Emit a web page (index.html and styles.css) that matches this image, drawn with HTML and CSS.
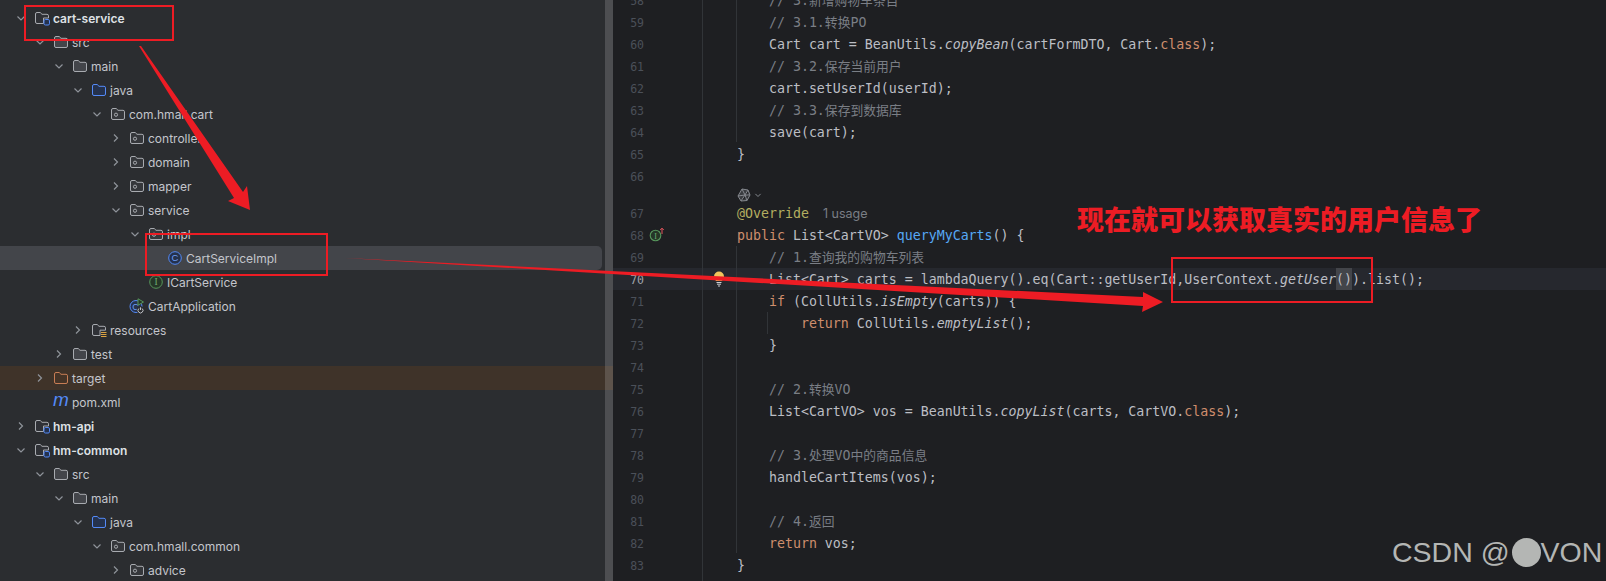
FILE: index.html
```html
<!DOCTYPE html>
<html lang="zh">
<head>
<meta charset="utf-8">
<title>cart-service</title>
<link rel="stylesheet" href="styles.css">
</head>
<body>
<svg class="defs" width="0" height="0" aria-hidden="true">
  <defs>
    <symbol id="down" viewBox="0 0 16 16"><path d="M4.500 6.500 8 10l3.500-3.500" fill="none" stroke="#8f939a" stroke-width="1.200"/></symbol>
    <symbol id="right" viewBox="0 0 16 16"><path d="M6 4.500 9.500 8 6 11.500" fill="none" stroke="#8f939a" stroke-width="1.200"/></symbol>
    <symbol id="folder" viewBox="0 0 16 16"><path d="M1.500 4a1.500 1.500 0 0 1 1.500-1.500h3.200l1.800 1.800h5a1.500 1.500 0 0 1 1.500 1.500v6.200a1.500 1.500 0 0 1-1.500 1.500H3a1.500 1.500 0 0 1-1.500-1.500z" fill="#43454a" stroke="#a8abb0"/></symbol>
    <symbol id="module" viewBox="0 0 16 16"><path d="M1.500 4a1.500 1.500 0 0 1 1.500-1.500h3.200l1.800 1.800h5a1.500 1.500 0 0 1 1.500 1.500v2.200H9.500v5.500H3a1.500 1.500 0 0 1-1.500-1.500z" fill="#2f3136" stroke="#a8abb0"/><rect x="10" y="9.500" width="5.500" height="5.500" rx="1.400" fill="#25324d" stroke="#548af7"/></symbol>
    <symbol id="source" viewBox="0 0 16 16"><path d="M1.500 4a1.500 1.500 0 0 1 1.500-1.500h3.200l1.800 1.800h5a1.500 1.500 0 0 1 1.500 1.500v6.200a1.500 1.500 0 0 1-1.500 1.500H3a1.500 1.500 0 0 1-1.500-1.500z" fill="#25324d" stroke="#548af7"/></symbol>
    <symbol id="package" viewBox="0 0 16 16"><path d="M1.500 4a1.500 1.500 0 0 1 1.500-1.500h3.200l1.800 1.800h5a1.500 1.500 0 0 1 1.500 1.500v6.200a1.500 1.500 0 0 1-1.500 1.500H3a1.500 1.500 0 0 1-1.500-1.500z" fill="#35373b" stroke="#a8abb0"/><circle cx="6" cy="8.700" r="1.600" fill="none" stroke="#a8abb0"/></symbol>
    <symbol id="target" viewBox="0 0 16 16"><path d="M1.500 4a1.500 1.500 0 0 1 1.500-1.500h3.200l1.800 1.800h5a1.500 1.500 0 0 1 1.500 1.500v6.200a1.500 1.500 0 0 1-1.500 1.500H3a1.500 1.500 0 0 1-1.500-1.500z" fill="#453427" stroke="#c77d55"/></symbol>
    <symbol id="resources" viewBox="0 0 16 16"><path d="M1.500 4a1.500 1.500 0 0 1 1.500-1.500h3.200l1.800 1.800h5a1.500 1.500 0 0 1 1.500 1.500v2.400H9v5.300H3a1.500 1.500 0 0 1-1.500-1.500z" fill="#2f3136" stroke="#a8abb0"/><path d="M10 10.500h5.500M10 12.500h5.500M10 14.500h5.500" stroke="#d9a343" stroke-width="1"/></symbol>
    <symbol id="class" viewBox="0 0 16 16"><circle cx="8" cy="8" r="6.300" fill="#25324d" stroke="#548af7"/><text x="8" y="11.300" text-anchor="middle" font-size="9.500" font-family="Liberation Sans, sans-serif" fill="#6f9ff8">C</text></symbol>
    <symbol id="iface" viewBox="0 0 16 16"><circle cx="8" cy="8" r="6.300" fill="#253627" stroke="#57965c"/><text x="8" y="11.300" text-anchor="middle" font-size="9.500" font-family="Liberation Serif, serif" fill="#6fae74">I</text></symbol>
    <symbol id="app" viewBox="0 0 16 16"><circle cx="7" cy="8.500" r="6" fill="#25324d" stroke="#548af7"/><text x="6.500" y="11.800" text-anchor="middle" font-size="9" font-family="Liberation Sans, sans-serif" fill="#6f9ff8">C</text><path d="M9 .8v6.400L14.500 4z" fill="#253627" stroke="#57965c"/><circle cx="11.500" cy="12" r="3.800" fill="#2b2d30"/><path d="M9.900 10.500a2.500 2.500 0 1 0 3.200 0M11.500 9.300v2.700" fill="none" stroke="#c0c2c7"/></symbol>
    <symbol id="gutter-impl" viewBox="0 0 16 16"><circle cx="6.500" cy="8.500" r="5.300" fill="#253627" stroke="#57965c" stroke-width="1.100"/><text x="6.500" y="11.500" text-anchor="middle" font-size="8" font-family="Liberation Serif, serif" fill="#6fae74">I</text><path d="M13 7V1.200M11.200 3 13 1.200 14.800 3" fill="none" stroke="#e2545c" stroke-width="1"/></symbol>
    <symbol id="lamp" viewBox="0 0 12 16"><path d="M1 5.500a5 5 0 0 1 10 0c0 1.800-1.200 3-2 4.500H3C2.200 8.500 1 7.300 1 5.500z" fill="#f2c55c"/><path d="M3.500 11.500h5M4 13.200h4M5 15h2" stroke="#ced0d6" stroke-width="1"/></symbol>
    <symbol id="swirl" viewBox="0 0 14 14"><path d="M5 1 11 2 13 7 10 12.500 4 13 1 8zM5 1l3 6-7 1M11 2 8 7l2 5.500M13 7H8L4 13" fill="#3a3c40" stroke="#85888e" stroke-width="1"/></symbol>
  </defs>
</svg>

<div class="window">
  <aside class="tree">
    <div class="row d0"><svg class="chev"><use href="#down"/></svg><svg class="ico"><use href="#module"/></svg><span class="mod">cart-service</span></div>
    <div class="row d1"><svg class="chev"><use href="#down"/></svg><svg class="ico"><use href="#folder"/></svg><span>src</span></div>
    <div class="row d2"><svg class="chev"><use href="#down"/></svg><svg class="ico"><use href="#folder"/></svg><span>main</span></div>
    <div class="row d3"><svg class="chev"><use href="#down"/></svg><svg class="ico"><use href="#source"/></svg><span>java</span></div>
    <div class="row d4"><svg class="chev"><use href="#down"/></svg><svg class="ico"><use href="#package"/></svg><span>com.hmall.cart</span></div>
    <div class="row d5"><svg class="chev"><use href="#right"/></svg><svg class="ico"><use href="#package"/></svg><span>controller</span></div>
    <div class="row d5"><svg class="chev"><use href="#right"/></svg><svg class="ico"><use href="#package"/></svg><span>domain</span></div>
    <div class="row d5"><svg class="chev"><use href="#right"/></svg><svg class="ico"><use href="#package"/></svg><span>mapper</span></div>
    <div class="row d5"><svg class="chev"><use href="#down"/></svg><svg class="ico"><use href="#package"/></svg><span>service</span></div>
    <div class="row d6"><svg class="chev"><use href="#down"/></svg><svg class="ico"><use href="#package"/></svg><span>impl</span></div>
    <div class="row d7 selected"><i class="chev"></i><svg class="ico"><use href="#class"/></svg><span>CartServiceImpl</span></div>
    <div class="row d6"><i class="chev"></i><svg class="ico"><use href="#iface"/></svg><span>ICartService</span></div>
    <div class="row d5"><i class="chev"></i><svg class="ico"><use href="#app"/></svg><span>CartApplication</span></div>
    <div class="row d3"><svg class="chev"><use href="#right"/></svg><svg class="ico"><use href="#resources"/></svg><span>resources</span></div>
    <div class="row d2"><svg class="chev"><use href="#right"/></svg><svg class="ico"><use href="#folder"/></svg><span>test</span></div>
    <div class="row d1 excluded"><svg class="chev"><use href="#right"/></svg><svg class="ico"><use href="#target"/></svg><span>target</span></div>
    <div class="row d1"><i class="chev"></i><span class="maven">m</span><span>pom.xml</span></div>
    <div class="row d0"><svg class="chev"><use href="#right"/></svg><svg class="ico"><use href="#module"/></svg><span class="mod">hm-api</span></div>
    <div class="row d0"><svg class="chev"><use href="#down"/></svg><svg class="ico"><use href="#module"/></svg><span class="mod">hm-common</span></div>
    <div class="row d1"><svg class="chev"><use href="#down"/></svg><svg class="ico"><use href="#folder"/></svg><span>src</span></div>
    <div class="row d2"><svg class="chev"><use href="#down"/></svg><svg class="ico"><use href="#folder"/></svg><span>main</span></div>
    <div class="row d3"><svg class="chev"><use href="#down"/></svg><svg class="ico"><use href="#source"/></svg><span>java</span></div>
    <div class="row d4"><svg class="chev"><use href="#down"/></svg><svg class="ico"><use href="#package"/></svg><span>com.hmall.common</span></div>
    <div class="row d5"><svg class="chev"><use href="#right"/></svg><svg class="ico"><use href="#package"/></svg><span>advice</span></div>
    <div class="scrollbar"></div>
  </aside>

  <main class="editor">
    <div class="guide gutter-line"></div>
    <div class="guide body-a"></div>
    <div class="guide body-b"></div>
    <div class="guide body-c"></div>
    <div class="lines">
      <div class="line"><span class="ln">58</span><span class="mark"></span><code>    <span class="c">// 3.<span class="z">新增购物车条目</span></span></code></div>
      <div class="line"><span class="ln">59</span><span class="mark"></span><code>    <span class="c">// 3.1.<span class="z">转换</span>PO</span></code></div>
      <div class="line"><span class="ln">60</span><span class="mark"></span><code>    Cart cart = BeanUtils.<em>copyBean</em>(cartFormDTO, Cart.<span class="k">class</span>);</code></div>
      <div class="line"><span class="ln">61</span><span class="mark"></span><code>    <span class="c">// 3.2.<span class="z">保存当前用户</span></span></code></div>
      <div class="line"><span class="ln">62</span><span class="mark"></span><code>    cart.setUserId(userId);</code></div>
      <div class="line"><span class="ln">63</span><span class="mark"></span><code>    <span class="c">// 3.3.<span class="z">保存到数据库</span></span></code></div>
      <div class="line"><span class="ln">64</span><span class="mark"></span><code>    save(cart);</code></div>
      <div class="line"><span class="ln">65</span><span class="mark"></span><code>}</code></div>
      <div class="line"><span class="ln">66</span><span class="mark"></span><code></code></div>
      <div class="inlay"><svg class="swirl"><use href="#swirl"/></svg><svg class="inlay-chev"><use href="#down"/></svg></div>
      <div class="line"><span class="ln">67</span><span class="mark"></span><code><span class="a">@Override</span><span class="usage">1 usage</span></code></div>
      <div class="line"><span class="ln">68</span><span class="mark"><svg class="impl"><use href="#gutter-impl"/></svg></span><code><span class="k">public</span> List&lt;CartVO&gt; <span class="m">queryMyCarts</span>() {</code></div>
      <div class="line"><span class="ln">69</span><span class="mark"></span><code>    <span class="c">// 1.<span class="z">查询我的购物车列表</span></span></code></div>
      <div class="line caret"><span class="ln cur">70</span><span class="mark"><svg class="lamp"><use href="#lamp"/></svg></span><code>    List&lt;Cart&gt; carts = lambdaQuery().eq(Cart::getUserId,UserContext.<em>getUser</em><span class="pair">()</span>).list();</code></div>
      <div class="line"><span class="ln">71</span><span class="mark"></span><code>    <span class="k">if</span> (CollUtils.<em>isEmpty</em>(carts)) {</code></div>
      <div class="line"><span class="ln">72</span><span class="mark"></span><code>        <span class="k">return</span> CollUtils.<em>emptyList</em>();</code></div>
      <div class="line"><span class="ln">73</span><span class="mark"></span><code>    }</code></div>
      <div class="line"><span class="ln">74</span><span class="mark"></span><code></code></div>
      <div class="line"><span class="ln">75</span><span class="mark"></span><code>    <span class="c">// 2.<span class="z">转换</span>VO</span></code></div>
      <div class="line"><span class="ln">76</span><span class="mark"></span><code>    List&lt;CartVO&gt; vos = BeanUtils.<em>copyList</em>(carts, CartVO.<span class="k">class</span>);</code></div>
      <div class="line"><span class="ln">77</span><span class="mark"></span><code></code></div>
      <div class="line"><span class="ln">78</span><span class="mark"></span><code>    <span class="c">// 3.<span class="z">处理</span>VO<span class="z">中的商品信息</span></span></code></div>
      <div class="line"><span class="ln">79</span><span class="mark"></span><code>    handleCartItems(vos);</code></div>
      <div class="line"><span class="ln">80</span><span class="mark"></span><code></code></div>
      <div class="line"><span class="ln">81</span><span class="mark"></span><code>    <span class="c">// 4.<span class="z">返回</span></span></code></div>
      <div class="line"><span class="ln">82</span><span class="mark"></span><code>    <span class="k">return</span> vos;</code></div>
      <div class="line"><span class="ln">83</span><span class="mark"></span><code>}</code></div>
    </div>
  </main>

  <svg class="marks" width="1606" height="581" viewBox="0 0 1606 581" aria-hidden="true">
    <g fill="none" stroke="#ed1c24" stroke-width="2">
      <rect x="25" y="6" width="148" height="34"/>
      <rect x="146" y="234" width="181" height="41"/>
      <rect x="1172" y="258" width="200" height="44"/>
    </g>
    <g fill="#ed1c24">
      <path d="M139 46 141 46 243 192 247 186 250 210 228 201 234 198z"/>
      <path d="M345 258 1143 297 1143 292 1163 302 1142 312 1143 306z"/>
    </g>
  </svg>
  <div class="note">现在就可以获取真实的用户信息了</div>
  <div class="watermark">CSDN @<i class="blob"></i>VON</div>
</div>
</body>
</html>
```
FILE: styles.css
```css
* { box-sizing: border-box; }
html, body { margin: 0; padding: 0; height: 581px; overflow: hidden; background: #1e1f22; }
.defs { position: absolute; }

.window { position: relative; display: flex; width: 1606px; height: 581px; overflow: hidden; }

/* project tree */
.tree {
  position: relative;
  flex: 0 0 613px;
  padding-top: 6px;
  background: #2b2d30;
  color: #c4c6cc;
  font: 12px/22px Inter, "Noto Sans", sans-serif;
  overflow: hidden;
}
.row { display: flex; align-items: center; height: 24px; white-space: nowrap; }
.row span { padding-top: 2px; }
.d0 { padding-left: 13px; }
.d1 { padding-left: 32px; }
.d2 { padding-left: 51px; }
.d3 { padding-left: 70px; }
.d4 { padding-left: 89px; }
.d5 { padding-left: 108px; }
.d6 { padding-left: 127px; }
.d7 { padding-left: 146px; }
.chev { display: block; flex: 0 0 16px; width: 16px; height: 16px; margin-right: 5px; }
.ico { display: block; flex: 0 0 16px; width: 16px; height: 16px; margin-right: 3px; }
.mod { font-weight: 600; color: #dfe1e5; }
.selected { margin-right: 11px; border-radius: 0 5px 5px 0; background: #43454a; }
.excluded { background: #3f3329; }
.row .maven {
  flex: 0 0 16px;
  width: 16px;
  margin-right: 3px;
  padding-top: 0;
  color: #548af7;
  font: italic 19px/24px "Liberation Sans", sans-serif;
  transform: translateY(-2px);
}
.scrollbar {
  position: absolute;
  top: 0;
  bottom: 0;
  left: 605px;
  width: 8px;
  background: rgba(255, 255, 255, 0.16);
}

/* editor */
.editor {
  position: relative;
  flex: 1 1 auto;
  background: #1e1f22;
  color: #bcbec4;
  font: 13.280px/24px "DejaVu Sans Mono", monospace;
  overflow: hidden;
}
.lines { margin-top: -11px; }
.line { display: flex; height: 22px; }
.caret { background: #26282e; }
.ln {
  flex: 0 0 31px;
  text-align: right;
  color: #4b5059;
  font-size: 11.500px;
}
.ln.cur { color: #a1a3ab; }
.mark { display: flex; align-items: center; flex: 0 0 93px; }
code { font: inherit; white-space: pre; }
em { font-style: italic; }
.c { color: #7a7e85; }
.z { font-family: "Noto Sans CJK SC", sans-serif; font-size: 12.800px; line-height: 0; }
.k { color: #cf8e6d; }
.m { color: #56a8f5; }
.a { color: #b3ae60; }
.usage {
  margin-left: 14px;
  color: #7a7e85;
  font: 12.500px/22px Inter, sans-serif;
}
.pair { display: inline-block; height: 22px; line-height: 24px; background: #43454a; vertical-align: top; }
.inlay { display: flex; align-items: center; height: 15px; padding-left: 124px; }
.swirl { width: 14px; height: 14px; }
.inlay-chev { width: 12px; height: 12px; margin-left: 1px; }
.impl { width: 16px; height: 16px; margin-left: 5px; }
.lamp { width: 12px; height: 16px; margin-left: 69px; }

.guide { position: absolute; width: 1px; background: #313438; z-index: 1; }
.gutter-line { left: 89px; top: 0; bottom: 0; }
.body-a { left: 123px; top: 0; height: 142px; }
.body-b { left: 123px; top: 246px; height: 307px; }
.body-c { left: 154px; top: 312px; height: 22px; }

/* annotations drawn on top of the screenshot */
.marks { position: absolute; left: 0; top: 0; z-index: 2; pointer-events: none; }
.note {
  position: absolute;
  left: 1077px;
  top: 199px;
  z-index: 3;
  color: #ed1c24;
  font: 900 27px/40px "Noto Sans CJK SC", sans-serif;
  white-space: nowrap;
}
.watermark {
  position: absolute;
  left: 1392px;
  top: 535px;
  z-index: 3;
  display: flex;
  align-items: center;
  color: #b4b6b4;
  font: 28.500px/34px "Liberation Sans", sans-serif;
  white-space: pre;
}
.blob {
  display: block;
  width: 29px;
  height: 29px;
  margin-left: 2px;
  border-radius: 50%;
  background: #b4b6b4;
}
```
